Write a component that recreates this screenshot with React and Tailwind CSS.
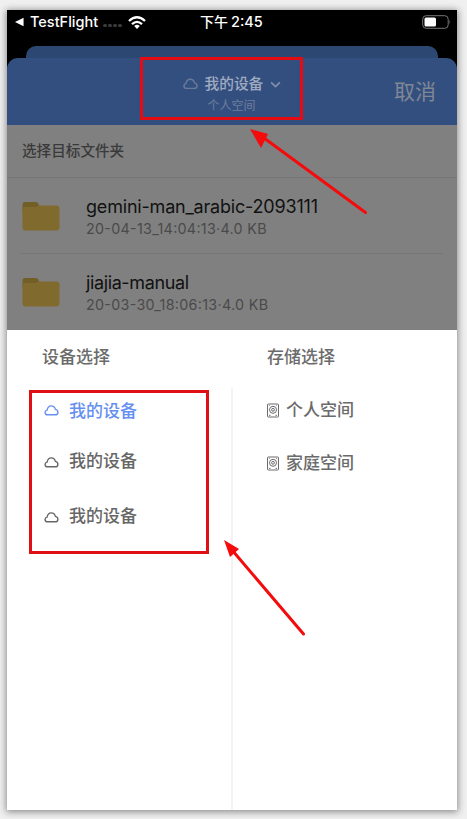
import React from "react";

const CloudIcon = ({ className }) => (
  <svg viewBox="0 0 16 12" className={className} fill="none" stroke="currentColor" strokeWidth="1.5" strokeLinejoin="round">
    <path d="M3.7 10.7C2 10.7 1 9.500 1 8.100c0-1.400.9-2.300 2.200-2.500C3.700 2.800 5.300 1 7.700 1c2.300 0 4 1.500 4.500 3.800 1.700.3 2.800 1.400 2.800 3 0 1.700-1.200 2.900-2.900 2.900z" />
  </svg>
);

const DiskIcon = () => (
  <svg viewBox="0 0 12 14" className="h-[15px] w-3 shrink-0" fill="none" stroke="currentColor" strokeWidth="1">
    <rect x="0.500" y="0.500" width="11" height="13" rx="0.700" />
    <circle cx="6" cy="6.300" r="3.500" />
    <circle cx="6" cy="6.300" r="1.400" />
    <path d="M2 11.800h1.500M8.500 11.800H10M1.900 2h.7M9.400 2h.7" />
  </svg>
);

const FolderIcon = () => (
  <svg viewBox="0 0 38 30" className="h-[30px] w-[38px] shrink-0">
    <path d="M.5 12V3.500Q.5 1 3 1H14q1.500 0 2.200 1.500L18 6v6z" fill="#725e27" />
    <path d="M.5 7q0-1 1.500-1H13q1.500 0 2.500-1l.5-.5H34.500q3 0 3 3V26.500q0 3-3 3H3.500q-3 0-3-3z" fill="#806a2d" />
  </svg>
);

function StatusBar() {
  return (
    <div className="grid h-9 grid-cols-[194px_1fr_auto] items-start pt-[3px] text-[15px] leading-[18px] font-medium text-white">
      <div className="flex items-center pl-2">
        <svg viewBox="0 0 10 10" className="h-[10px] w-[9px]" fill="currentColor"><path d="M0 5 9.500.300v9.400z" /></svg>
        <span className="ml-[6px] w-[69px] text-[14.500px] whitespace-nowrap">TestFlight</span>
        <div className="mt-[7px] ml-1 flex gap-[1.500px]">
          <i className="size-[3.500px] rounded-full bg-[#3b3b3b]" />
          <i className="size-[3.500px] rounded-full bg-[#3b3b3b]" />
          <i className="size-[3.500px] rounded-full bg-[#3b3b3b]" />
          <i className="size-[3.500px] rounded-full bg-[#3b3b3b]" />
        </div>
        <svg viewBox="0 0 18 13" className="ml-[6px] h-[13px] w-[18px]" fill="none" stroke="currentColor" strokeWidth="2.300">
          <path d="M1 5Q9-2.500 17 5M4 8.100Q9 3.600 14 8.100" />
          <path d="M6.200 10Q9 7.600 11.800 10L9 12.900z" fill="currentColor" stroke="none" />
        </svg>
      </div>
      <div className="flex gap-[3px] whitespace-nowrap"><span className="-ml-px text-[14px]">下午</span><span className="text-[14.500px]">2:45</span></div>
      <svg viewBox="0 0 29 14" className="mt-[2px] mr-[6px] h-[14px] w-[29px]">
        <rect x="0.700" y="0.700" width="25.500" height="12.600" rx="3.500" fill="none" stroke="#777" />
        <rect x="2.500" y="2.500" width="11.500" height="9" rx="1.500" fill="#fff" />
        <path d="M27.500 4.700q1.500 2.300 0 4.600z" fill="#777" />
      </svg>
    </div>
  );
}

function FolderRow({ name, meta, nameWidth, metaWidth }) {
  return (
    <div className="flex h-[76px] items-center pl-[15px]">
      <FolderIcon />
      <div className="ml-[26px] pt-px whitespace-nowrap">
        <svg className="block h-6 overflow-visible" width={nameWidth}>
          <text x="0" y="18" fontSize="18" textLength={nameWidth} fill="#111111">{name}</text>
        </svg>
        <svg className="block h-5 overflow-visible" width={metaWidth}>
          <text x="0" y="15" fontSize="14.300" textLength={metaWidth} fill="#4a4a4a">{meta}</text>
        </svg>
      </div>
    </div>
  );
}

const Device = ({ active, className }) => (
  <div className={`flex items-center ${active ? "text-[#6590f0]" : "text-[#666]"} ${className}`}>
    <CloudIcon className={active ? "-mt-px h-[11px] w-[15px]" : "mt-[2px] h-[11px] w-[15px]"} />
    <span className="ml-[10px]">我的设备</span>
  </div>
);

const Arrow = ({ className, width, height, line, head }) => (
  <svg className={`pointer-events-none absolute ${className}`} width={width} height={height}>
    <path d={line} stroke="#f40b0b" strokeWidth="3" strokeLinecap="round" />
    <path d={head} fill="#f40b0b" />
  </svg>
);

export default function App() {
  return (
    <div className="relative h-[819px] w-[467px] overflow-hidden bg-[#f0f0f0] pt-[10px] pl-[7px] font-[Inter,'Noto_Sans_CJK_SC',sans-serif]">
      <div className="flex h-[800px] w-[450px] flex-col bg-black shadow-[0_1px_7px_1px_rgba(0,0,0,0.42)]">
        <StatusBar />
        <div className="mr-[19px] ml-[19px] h-3 shrink-0 rounded-t-[10px] bg-[#2c4771]" />
        <div className="bg-[linear-gradient(to_right,#000_19px,#2c4771_19px,#2c4771_431px,#000_431px)]">
          <header className="grid h-[67px] grid-cols-[1fr_160px_1fr] items-center rounded-t-[11px] bg-[#334f80]">
            <div className="col-start-2 flex flex-col items-center pt-[6px] pr-px">
              <div className="flex items-center text-[15px] leading-[21px] font-medium text-[#a1abc0]">
                <CloudIcon className="mr-[7px] h-3 w-[15px] text-[#697b99]" />
                <span className="w-[59px] text-[14.700px] whitespace-nowrap">我的设备</span>
                <svg viewBox="0 0 12 8" className="ml-[6px] h-[7px] w-[11px] text-[#8190aa]" fill="none" stroke="currentColor" strokeWidth="1.900"><path d="m1 1.500 5 5 5-5" /></svg>
              </div>
              <div className="pt-px text-[12px] leading-[20px] text-[#6f7e9b]">个人空间</div>
            </div>
            <div className="justify-self-end pr-[21px] text-[21px] leading-7 text-[#808794]">取消</div>
          </header>
        </div>
        <section className="h-[205px] shrink-0 bg-[#808080]">
          <div className="flex h-[53px] items-center border-b border-[#767676] pt-[2px] pl-[15px] text-[14.600px] font-medium text-[#3a3a3a]">选择目标文件夹</div>
          <FolderRow name="gemini-man_arabic-2093111" meta="20-04-13_14:04:13·4.0 KB" nameWidth={232} metaWidth={180.5} />
          <div className="-mt-px mr-[14px] ml-[13px] h-px bg-[#767676]" />
          <FolderRow name="jiajia-manual" meta="20-03-30_18:06:13·4.0 KB" nameWidth={103} metaWidth={182} />
        </section>
        <section className="grid min-h-0 flex-1 grid-cols-[224px_2px_1fr] bg-white text-[17px] leading-6 font-medium text-[#6b6b6b]">
          <div className="pt-[15px] pl-[37px]">
            <h2 className="-ml-[2px]">设备选择</h2>
            <Device active className="mt-[30px]" />
            <Device className="mt-[26px]" />
            <Device className="mt-[31px]" />
          </div>
          <div className="mt-[58px] bg-[#f3f3f3]" />
          <div className="pt-[15px] pl-[34px]">
            <h2>存储选择</h2>
            <div className="mt-[29px] flex items-center gap-[7px]"><DiskIcon />个人空间</div>
            <div className="mt-[29px] flex items-center gap-[7px]"><DiskIcon />家庭空间</div>
          </div>
        </section>
      </div>
      <div className="pointer-events-none absolute top-[57px] left-[140px] h-[63px] w-[163px] border-[3px] border-[#e40c12]" />
      <div className="pointer-events-none absolute top-[390px] left-[29px] h-[164px] w-[180px] border-[3px] border-[#df1015]" />
      <Arrow className="top-[124px] left-[246px]" width="125" height="95" line="M18 14 119.500 88.500" head="M4 5 22 10 15 24z" />
      <Arrow className="top-[535px] left-[220px]" width="90" height="105" line="M12 15 83.500 99" head="M4 5 19 14 10 22z" />
    </div>
  );
}
